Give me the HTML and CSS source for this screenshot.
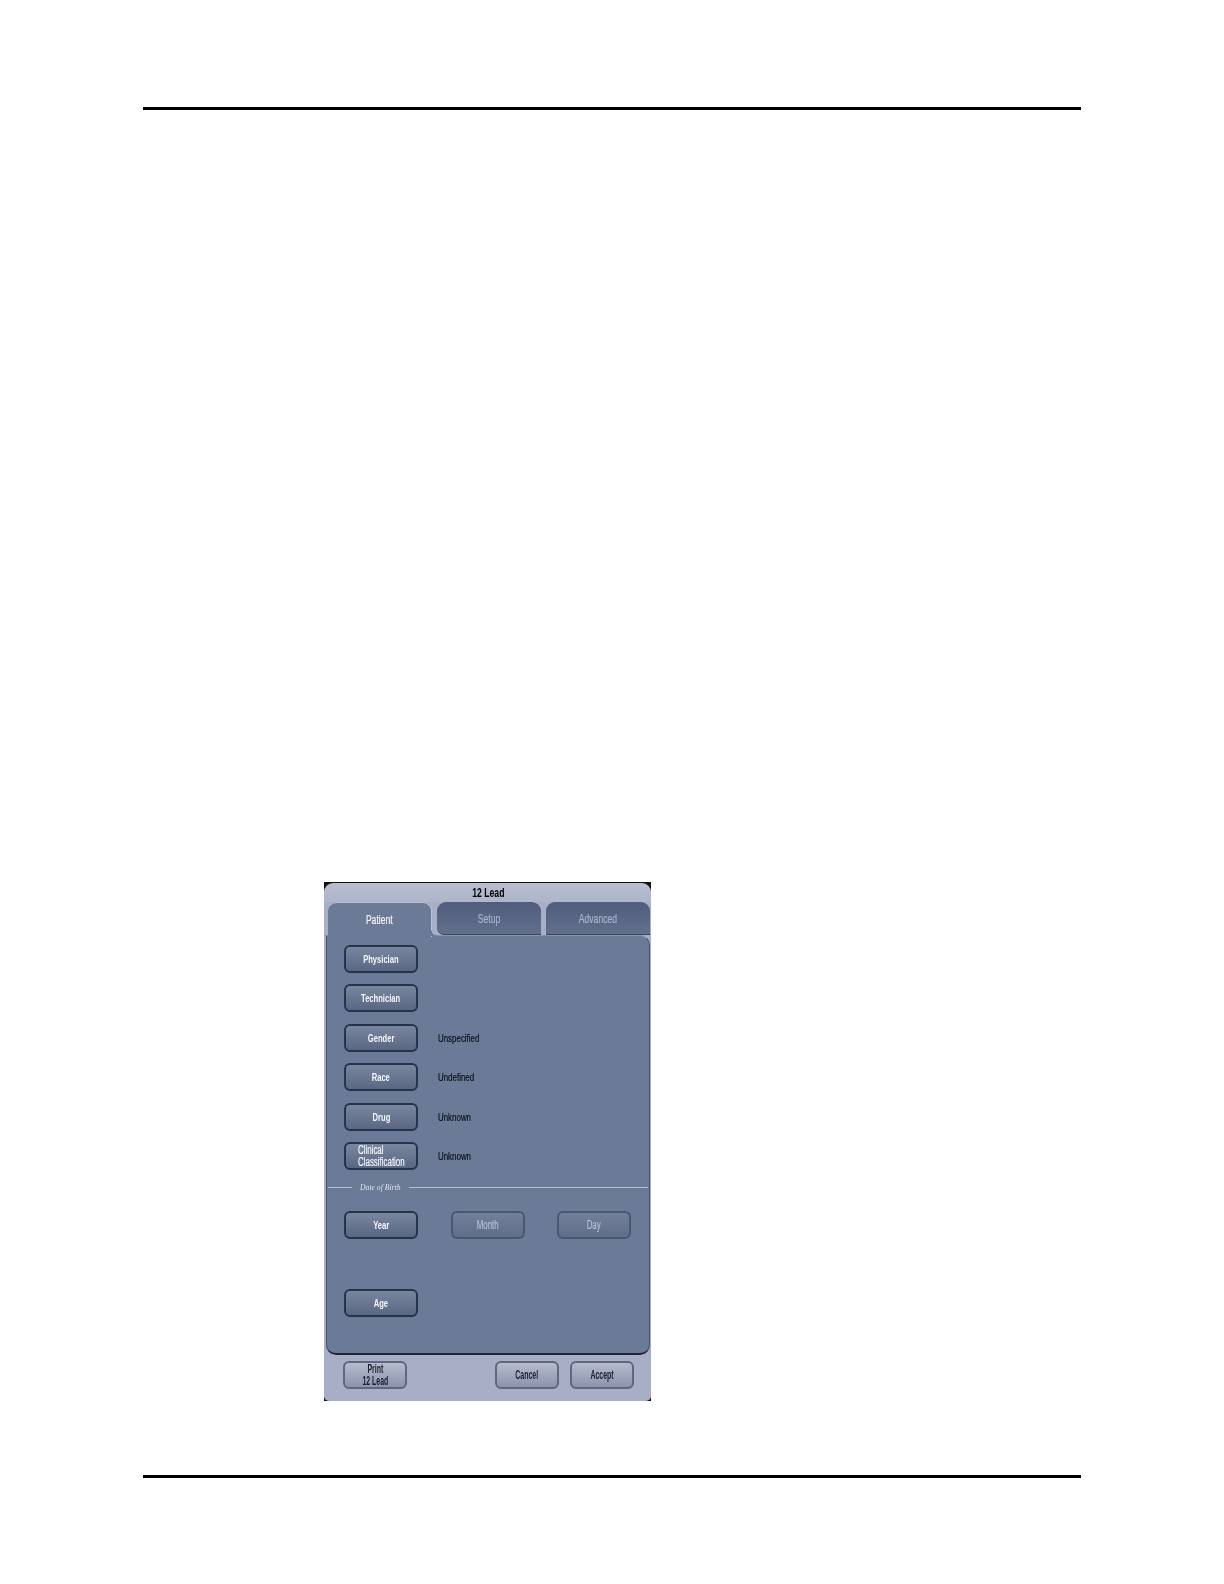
FILE: index.html
```html
<!DOCTYPE html>
<html lang="en">
<head>
    <meta charset="UTF-8">
    <meta name="viewport" content="width=device-width, initial-scale=1.0">
    <title>12 Lead</title>
    <link rel="stylesheet" href="styles.css">
</head>
<body>
    <div class="page">
        <div class="rule"></div>
        <div class="dialog">
            <div class="dialog-title"><span class="narrow">12 Lead</span></div>
            <div class="tabs">
                <div class="tab active"><span class="narrow">Patient</span></div>
                <div class="tab"><span class="narrow">Setup</span></div>
                <div class="tab"><span class="narrow">Advanced</span></div>
            </div>
            <div class="panel">
                <div class="rows">
                    <div class="row"><button class="btn"><span class="narrow">Physician</span></button></div>
                    <div class="row"><button class="btn"><span class="narrow">Technician</span></button></div>
                    <div class="row"><button class="btn"><span class="narrow">Gender</span></button><span class="value">Unspecified</span></div>
                    <div class="row"><button class="btn"><span class="narrow">Race</span></button><span class="value">Undefined</span></div>
                    <div class="row"><button class="btn"><span class="narrow">Drug</span></button><span class="value">Unknown</span></div>
                    <div class="row"><button class="btn two-line"><span class="narrow">Clinical<br>Classification</span></button><span class="value">Unknown</span></div>
                </div>
                <div class="divider"><span class="line short"></span><span class="legend">Date of Birth</span><span class="line"></span></div>
                <div class="date-row">
                    <button class="btn"><span class="narrow">Year</span></button>
                    <button class="btn disabled"><span class="narrow">Month</span></button>
                    <button class="btn disabled"><span class="narrow">Day</span></button>
                </div>
                <div class="age-row"><button class="btn"><span class="narrow">Age</span></button></div>
            </div>
            <div class="footer">
                <button class="btn light"><span class="narrow">Print<br>12 Lead</span></button>
                <div class="footer-right">
                    <button class="btn light"><span class="narrow">Cancel</span></button>
                    <button class="btn light"><span class="narrow">Accept</span></button>
                </div>
            </div>
        </div>
        <div class="rule bottom"></div>
    </div>
</body>
</html>
```

FILE: styles.css
```css
body { margin: 0; background: #fff; font-family: 'Liberation Sans', Arial, sans-serif; }
.page { width: 1081px; height: 1584px; padding: 107px 0 0 143px; box-sizing: border-box; display: flex; flex-direction: column; }
.rule { height: 3px; background: #000; flex: none; }
.rule.bottom { margin-top: 74px; }

/* no condensed font installed, so text gets squeezed */
.narrow { display: inline-block; transform: scaleX(0.66); white-space: nowrap; }

.dialog { width: 327px; height: 519px; margin: 772px 0 0 181px; display: flex; flex-direction: column; background: linear-gradient(#111 12px, #a7aec6 12px, #a7aec6 calc(100% - 12px), #111 calc(100% - 12px)); border-top: 1px solid #111; box-sizing: border-box; flex: none; filter: blur(0.4px); }
.dialog-title { height: 19px; flex: none; padding-left: 2px; background: linear-gradient(#b9becf, #aeb4ca); border-radius: 9px 9px 0 0; text-align: center; font-size: 12px; font-weight: bold; line-height: 21px; color: #000; }
.dialog-title .narrow { transform: scaleX(0.72); }

.tabs { display: flex; gap: 5px; height: 33px; flex: none; padding-left: 4px; background: #a9afc7; }
.tab { width: 104px; border-radius: 9px 9px 0 0; background: linear-gradient(#4f5c7b, #626f8d); color: #a9b2c8; font-size: 13px; text-align: center; line-height: 34px; border-bottom: 1px solid #3c4763; box-sizing: border-box; -webkit-text-stroke: 0.2px; }
.tab.active { height: 35px; background: #6b7b97; color: #f2f4f8; border: 1px solid #bcc2d4; border-width: 1px 1px 0 0; position: relative; z-index: 1; }
.tab.active + .tab { border-bottom-left-radius: 7px; }
.tab.active::after { content: ""; position: absolute; left: 100%; bottom: 1px; width: 7px; height: 7px; background: radial-gradient(circle at 100% 0, transparent 6.5px, #6b7b97 7px); }

.panel { flex: 1; margin: 0 1px 0 2px; background: #6b7b97; border: 1px solid #46526c; border-top: 1px solid #8794ae; border-bottom: 2px solid #1e2636; border-radius: 0 10px 10px 10px; padding-top: 9px; box-sizing: border-box; }
.rows { display: flex; flex-direction: column; gap: 11.4px; padding-left: 17px; }
.row { display: flex; align-items: center; gap: 20px; }
.value { font-size: 11px; color: #0c111a; display: inline-block; transform: scaleX(0.72); transform-origin: left center; -webkit-text-stroke: 0.2px; }

.btn { width: 74px; height: 28px; padding: 0; flex: none; border: 2px solid #27334d; border-radius: 6px; background: linear-gradient(#78869f, #5a6783); color: #f4f6fa; font-family: inherit; font-size: 11.5px; font-weight: bold; line-height: 12px; text-align: center; box-sizing: border-box; }
.btn.two-line { text-align: left; padding-left: 12px; font-weight: normal; font-size: 12px; -webkit-text-stroke: 0.2px; }
.two-line .narrow { transform-origin: left center; text-align: left; }
.btn.disabled { border-color: #4a5773; color: #b5bdd0; font-weight: normal; font-size: 12px; background: linear-gradient(#72809b, #5f6d89); -webkit-text-stroke: 0.2px; }
.btn.light { width: 64px; border-color: #5f667e; background: linear-gradient(#b6bbce, #8d93ac); color: #1b2030; font-size: 12px; }
.btn.light .narrow { transform: scaleX(0.58); }

.divider { display: flex; align-items: center; gap: 8px; height: 10px; margin-top: 13px; padding: 0 1px; }
.line { flex: 1; height: 1px; background: #b4bdd2; }
.line.short { flex: none; width: 24px; }
.legend { font-family: 'Liberation Serif', serif; font-style: italic; font-size: 7.7px; color: #dfe3ec; white-space: nowrap; }

.date-row { display: flex; gap: 32.5px; margin-top: 18px; padding-left: 17px; }
.age-row { margin-top: 50px; padding-left: 17px; }

.footer { height: 46px; flex: none; display: flex; justify-content: space-between; padding: 6px 17px 0 19px; box-sizing: border-box; background: #a7aec6; border-radius: 0 0 5px 5px; }
.footer-right { display: flex; gap: 11px; }
```
